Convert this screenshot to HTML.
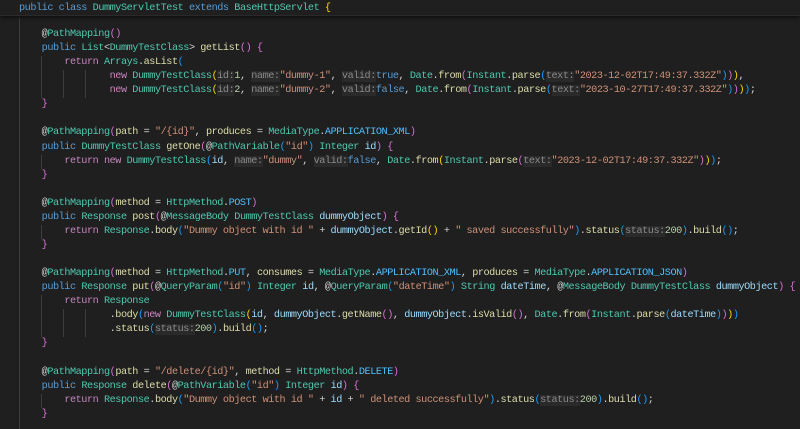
<!DOCTYPE html>
<html><head><meta charset="utf-8"><style>
html,body{margin:0;padding:0;background:#1f1f1f;width:800px;height:429px;overflow:hidden}
#w{position:relative;width:800px;height:429px;font-family:"Liberation Mono",monospace;font-size:10.2px;letter-spacing:-0.45px;color:#d4d4d4}
.code{position:absolute;left:19px;top:28px}
.l{height:14.07px;line-height:14.07px;white-space:pre}
.sticky{position:absolute;left:0;top:0;width:800px;height:15px;background:#1f1f1f;border-bottom:1px solid #2a2a2a;box-shadow:0 2px 3px #111;z-index:2}
.sticky .l{position:absolute;left:19px;top:2px}
.g{position:absolute;width:1px;background:#3c3c3c}
.k{color:#569cd6}.r{color:#c586c0}.t{color:#4ec9b0}.f{color:#dcdcaa}.s{color:#ce9178}.v{color:#9cdcfe}.c{color:#4fc1ff}.n{color:#b5cea8}
.h{color:#8a8a8a;background:#2a2a2a}
.a{color:#4ec9b0}
.b1{color:#ffd700}.b2{color:#da70d6}.b3{color:#179fff}
</style></head><body><div id="w">
<div class="g" style="left:19px;top:15px;height:414px"></div>
<div class="g" style="left:41px;top:56px;height:42px"></div>
<div class="g" style="left:63px;top:70px;height:28px"></div>
<div class="g" style="left:85px;top:70px;height:28px"></div>
<div class="g" style="left:41px;top:154.6px;height:14px"></div>
<div class="g" style="left:41px;top:225px;height:14px"></div>
<div class="g" style="left:41px;top:295.3px;height:42.2px"></div>
<div class="g" style="left:63px;top:309.4px;height:28.1px"></div>
<div class="g" style="left:85px;top:309.4px;height:28.1px"></div>
<div class="g" style="left:41px;top:393.8px;height:14px"></div>
<div class="sticky"><div class="l"><span class="k">public</span> <span class="k">class</span> <span class="t">DummyServletTest</span> <span class="k">extends</span> <span class="t">BaseHttpServlet</span> <span class="b1">{</span></div></div>
<div class="code">
<div class="l">    @<span class="a">PathMapping</span><span class="b2">()</span></div>
<div class="l">    <span class="k">public</span> <span class="t">List</span>&lt;<span class="t">DummyTestClass</span>&gt; <span class="f">getList</span><span class="b2">()</span> <span class="b2">{</span></div>
<div class="l">        <span class="r">return</span> <span class="t">Arrays</span>.<span class="f">asList</span><span class="b3">(</span></div>
<div class="l">                <span class="r">new</span> <span class="t">DummyTestClass</span><span class="b1">(</span><span class="h">id:</span><span class="n">1</span>, <span class="h">name:</span><span class="s">"dummy-1"</span>, <span class="h">valid:</span><span class="k">true</span>, <span class="t">Date</span>.<span class="f">from</span><span class="b2">(</span><span class="t">Instant</span>.<span class="f">parse</span><span class="b3">(</span><span class="h">text:</span><span class="s">"2023-12-02T17:49:37.332Z"</span><span class="b3">)</span><span class="b2">)</span><span class="b1">)</span>,</div>
<div class="l">                <span class="r">new</span> <span class="t">DummyTestClass</span><span class="b1">(</span><span class="h">id:</span><span class="n">2</span>, <span class="h">name:</span><span class="s">"dummy-2"</span>, <span class="h">valid:</span><span class="k">false</span>, <span class="t">Date</span>.<span class="f">from</span><span class="b2">(</span><span class="t">Instant</span>.<span class="f">parse</span><span class="b3">(</span><span class="h">text:</span><span class="s">"2023-10-27T17:49:37.332Z"</span><span class="b3">)</span><span class="b2">)</span><span class="b1">)</span><span class="b3">)</span>;</div>
<div class="l">    <span class="b2">}</span></div>
<div class="l"> </div>
<div class="l">    @<span class="a">PathMapping</span><span class="b2">(</span><span class="f">path</span> = <span class="s">"/{id}"</span>, <span class="f">produces</span> = <span class="t">MediaType</span>.<span class="c">APPLICATION_XML</span><span class="b2">)</span></div>
<div class="l">    <span class="k">public</span> <span class="t">DummyTestClass</span> <span class="f">getOne</span><span class="b2">(</span>@<span class="a">PathVariable</span><span class="b3">(</span><span class="s">"id"</span><span class="b3">)</span> <span class="t">Integer</span> <span class="v">id</span><span class="b2">)</span> <span class="b2">{</span></div>
<div class="l">        <span class="r">return</span> <span class="r">new</span> <span class="t">DummyTestClass</span><span class="b3">(</span><span class="v">id</span>, <span class="h">name:</span><span class="s">"dummy"</span>, <span class="h">valid:</span><span class="k">false</span>, <span class="t">Date</span>.<span class="f">from</span><span class="b1">(</span><span class="t">Instant</span>.<span class="f">parse</span><span class="b2">(</span><span class="h">text:</span><span class="s">"2023-12-02T17:49:37.332Z"</span><span class="b2">)</span><span class="b1">)</span><span class="b3">)</span>;</div>
<div class="l">    <span class="b2">}</span></div>
<div class="l"> </div>
<div class="l">    @<span class="a">PathMapping</span><span class="b2">(</span><span class="f">method</span> = <span class="t">HttpMethod</span>.<span class="c">POST</span><span class="b2">)</span></div>
<div class="l">    <span class="k">public</span> <span class="t">Response</span> <span class="f">post</span><span class="b2">(</span>@<span class="a">MessageBody</span> <span class="t">DummyTestClass</span> <span class="v">dummyObject</span><span class="b2">)</span> <span class="b2">{</span></div>
<div class="l">        <span class="r">return</span> <span class="t">Response</span>.<span class="f">body</span><span class="b3">(</span><span class="s">"Dummy object with id "</span> + <span class="v">dummyObject</span>.<span class="f">getId</span><span class="b1">()</span> + <span class="s">" saved successfully"</span><span class="b3">)</span>.<span class="f">status</span><span class="b3">(</span><span class="h">status:</span><span class="n">200</span><span class="b3">)</span>.<span class="f">build</span><span class="b3">()</span>;</div>
<div class="l">    <span class="b2">}</span></div>
<div class="l"> </div>
<div class="l">    @<span class="a">PathMapping</span><span class="b2">(</span><span class="f">method</span> = <span class="t">HttpMethod</span>.<span class="c">PUT</span>, <span class="f">consumes</span> = <span class="t">MediaType</span>.<span class="c">APPLICATION_XML</span>, <span class="f">produces</span> = <span class="t">MediaType</span>.<span class="c">APPLICATION_JSON</span><span class="b2">)</span></div>
<div class="l">    <span class="k">public</span> <span class="t">Response</span> <span class="f">put</span><span class="b2">(</span>@<span class="a">QueryParam</span><span class="b3">(</span><span class="s">"id"</span><span class="b3">)</span> <span class="t">Integer</span> <span class="v">id</span>, @<span class="a">QueryParam</span><span class="b3">(</span><span class="s">"dateTime"</span><span class="b3">)</span> <span class="t">String</span> <span class="v">dateTime</span>, @<span class="a">MessageBody</span> <span class="t">DummyTestClass</span> <span class="v">dummyObject</span><span class="b2">)</span> <span class="b2">{</span></div>
<div class="l">        <span class="r">return</span> <span class="t">Response</span></div>
<div class="l">                .<span class="f">body</span><span class="b3">(</span><span class="r">new</span> <span class="t">DummyTestClass</span><span class="b1">(</span><span class="v">id</span>, <span class="v">dummyObject</span>.<span class="f">getName</span><span class="b2">()</span>, <span class="v">dummyObject</span>.<span class="f">isValid</span><span class="b2">()</span>, <span class="t">Date</span>.<span class="f">from</span><span class="b2">(</span><span class="t">Instant</span>.<span class="f">parse</span><span class="b3">(</span><span class="v">dateTime</span><span class="b3">)</span><span class="b2">)</span><span class="b1">)</span><span class="b3">)</span></div>
<div class="l">                .<span class="f">status</span><span class="b3">(</span><span class="h">status:</span><span class="n">200</span><span class="b3">)</span>.<span class="f">build</span><span class="b3">()</span>;</div>
<div class="l">    <span class="b2">}</span></div>
<div class="l"> </div>
<div class="l">    @<span class="a">PathMapping</span><span class="b2">(</span><span class="f">path</span> = <span class="s">"/delete/{id}"</span>, <span class="f">method</span> = <span class="t">HttpMethod</span>.<span class="c">DELETE</span><span class="b2">)</span></div>
<div class="l">    <span class="k">public</span> <span class="t">Response</span> <span class="f">delete</span><span class="b2">(</span>@<span class="a">PathVariable</span><span class="b3">(</span><span class="s">"id"</span><span class="b3">)</span> <span class="t">Integer</span> <span class="v">id</span><span class="b2">)</span> <span class="b2">{</span></div>
<div class="l">        <span class="r">return</span> <span class="t">Response</span>.<span class="f">body</span><span class="b3">(</span><span class="s">"Dummy object with id "</span> + <span class="v">id</span> + <span class="s">" deleted successfully"</span><span class="b3">)</span>.<span class="f">status</span><span class="b3">(</span><span class="h">status:</span><span class="n">200</span><span class="b3">)</span>.<span class="f">build</span><span class="b3">()</span>;</div>
<div class="l">    <span class="b2">}</span></div>
</div>
</div></body></html>
